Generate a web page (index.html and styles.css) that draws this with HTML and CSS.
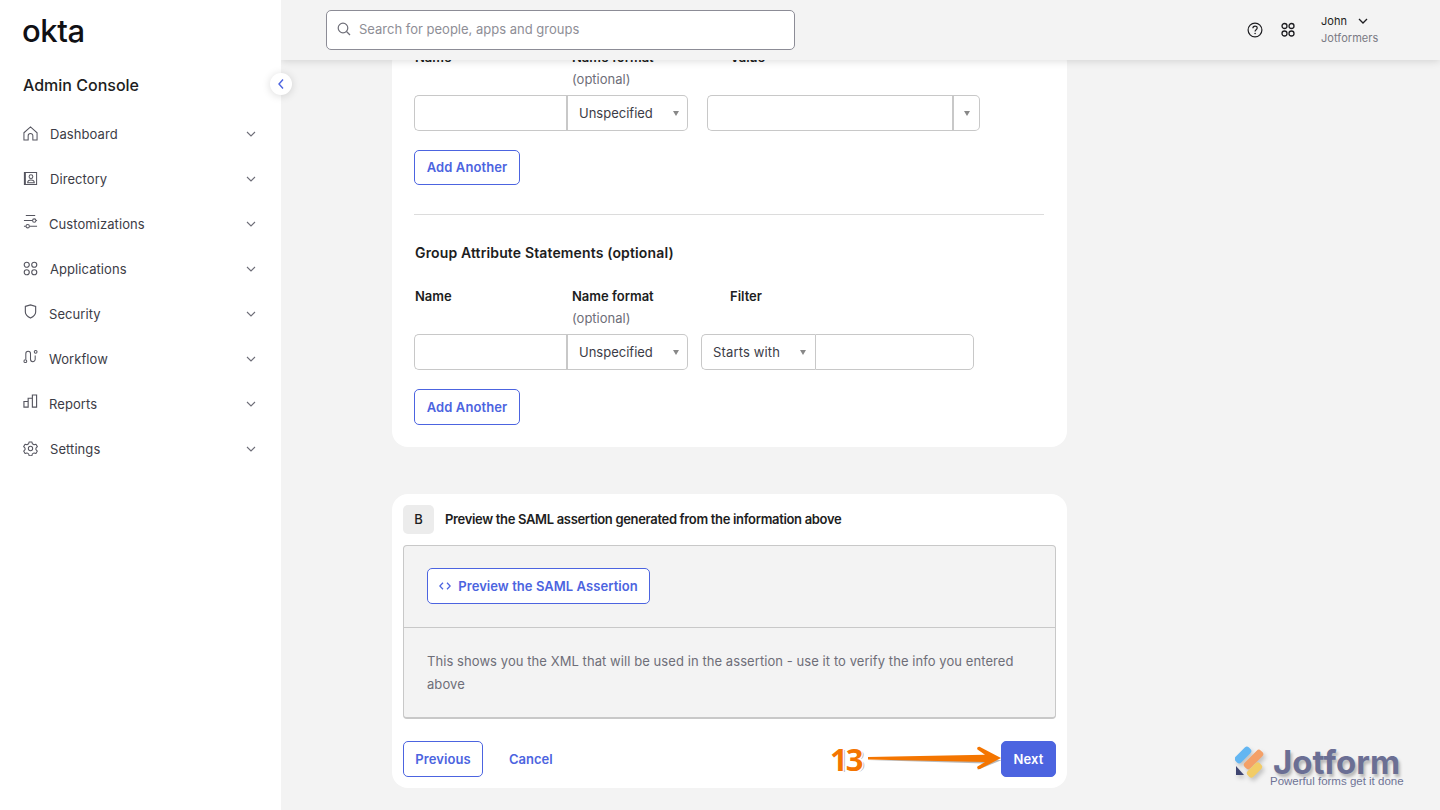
FILE: index.html
```html
<!DOCTYPE html>
<html lang="en">
<head>
    <meta charset="UTF-8">
    <meta name="viewport" content="width=device-width, initial-scale=1.0">
    <title>Admin Console</title>
    <link rel="stylesheet" href="styles.css">
</head>
<body>
    <div class="app">
        <aside class="sidebar">
            <div class="logo">okta</div>
            <h1 class="console_title">Admin Console</h1>
            <button class="collapse_btn" type="button">
                <svg width="10" height="12" viewBox="0 0 10 12"><path d="M7 1.5 3 6l4 4.5" fill="none" stroke="#4c64e0" stroke-width="1.4"/></svg>
            </button>
            <nav class="nav">
                <a class="nav_item">
                    <svg class="nav_icon" viewBox="0 0 16 16"><path d="M1 7.2 8 1l7 6.200V15h-4.500v-4.500a2.500 2.500 0 0 0-5 0V15H1z" fill="none" stroke="#55555f" stroke-width="1.100"/></svg>
                    <span>Dashboard</span>
                    <svg class="nav_chevron" viewBox="0 0 10 6"><path d="M1 1l4 4 4-4" fill="none" stroke="#6e6e78" stroke-width="1.100"/></svg>
                </a>
                <a class="nav_item">
                    <svg class="nav_icon" viewBox="0 0 16 16"><path d="M1.500 1.500h1v13h-1zM2.500 1.500h12v13h-12z" fill="none" stroke="#55555f" stroke-width="1.100"/><circle cx="8.500" cy="6" r="2" fill="none" stroke="#55555f" stroke-width="1.100"/><path d="M5 12.500c0-4 7-4 7 0z" fill="none" stroke="#55555f" stroke-width="1.100"/></svg>
                    <span>Directory</span>
                    <svg class="nav_chevron" viewBox="0 0 10 6"><path d="M1 1l4 4 4-4" fill="none" stroke="#6e6e78" stroke-width="1.100"/></svg>
                </a>
                <a class="nav_item nav_item_tight">
                    <svg class="nav_icon nav_icon_up" viewBox="0 0 16 16"><path d="M3 1.500h10M1 7h9M14 7h1M1 13h2M7 13h8" fill="none" stroke="#55555f" stroke-width="1.100"/><circle cx="12" cy="7" r="1.800" fill="none" stroke="#55555f" stroke-width="1.100"/><circle cx="5" cy="13" r="1.800" fill="none" stroke="#55555f" stroke-width="1.100"/></svg>
                    <span>Customizations</span>
                    <svg class="nav_chevron" viewBox="0 0 10 6"><path d="M1 1l4 4 4-4" fill="none" stroke="#6e6e78" stroke-width="1.100"/></svg>
                </a>
                <a class="nav_item">
                    <svg class="nav_icon" viewBox="0 0 16 16"><g fill="none" stroke="#55555f" stroke-width="1.200"><circle cx="4" cy="4" r="2.700"/><circle cx="12" cy="4" r="2.700"/><circle cx="4" cy="12" r="2.700"/><circle cx="12" cy="12" r="2.700"/></g></svg>
                    <span>Applications</span>
                    <svg class="nav_chevron" viewBox="0 0 10 6"><path d="M1 1l4 4 4-4" fill="none" stroke="#6e6e78" stroke-width="1.100"/></svg>
                </a>
                <a class="nav_item nav_item_tight">
                    <svg class="nav_icon nav_icon_up" viewBox="0 0 16 16"><path d="M2.500 2.500 8 1l5.500 1.500v6c0 3-2.500 5-5.500 6.500-3-1.500-5.500-3.500-5.500-6.500z" fill="none" stroke="#55555f" stroke-width="1.200"/></svg>
                    <span>Security</span>
                    <svg class="nav_chevron" viewBox="0 0 10 6"><path d="M1 1l4 4 4-4" fill="none" stroke="#6e6e78" stroke-width="1.100"/></svg>
                </a>
                <a class="nav_item nav_item_tight">
                    <svg class="nav_icon nav_icon_up" viewBox="0 0 16 16"><g fill="none" stroke="#55555f" stroke-width="1.100"><circle cx="2.500" cy="13" r="1.500"/><circle cx="13.500" cy="3" r="1.500"/><path d="M3 11V5a2.500 2.500 0 0 1 5 0v6a2.500 2.500 0 0 0 5 0V7"/></g></svg>
                    <span>Workflow</span>
                    <svg class="nav_chevron" viewBox="0 0 10 6"><path d="M1 1l4 4 4-4" fill="none" stroke="#6e6e78" stroke-width="1.100"/></svg>
                </a>
                <a class="nav_item nav_item_tight">
                    <svg class="nav_icon nav_icon_up" viewBox="0 0 16 16"><path d="M1 14V8h4.500v6zM5.500 14V4.500H10V14M10 14V1h4.500v13z" fill="none" stroke="#55555f" stroke-width="1.200"/></svg>
                    <span>Reports</span>
                    <svg class="nav_chevron" viewBox="0 0 10 6"><path d="M1 1l4 4 4-4" fill="none" stroke="#6e6e78" stroke-width="1.100"/></svg>
                </a>
                <a class="nav_item">
                    <svg class="nav_icon" viewBox="0 0 16 16"><path d="M6.500 1h3l.5 2 1.800 1 2-.6 1.500 2.600-1.500 1.500v1.800l1.500 1.400-1.500 2.600-2-.6-1.800 1-.5 2h-3l-.5-2-1.800-1-2 .6L.700 10.700l1.500-1.400V7.500L.700 6l1.500-2.600 2 .6L6 3z" fill="none" stroke="#55555f" stroke-width="1.100" stroke-linejoin="round"/><circle cx="8" cy="8" r="2.300" fill="none" stroke="#55555f" stroke-width="1.100"/></svg>
                    <span>Settings</span>
                    <svg class="nav_chevron" viewBox="0 0 10 6"><path d="M1 1l4 4 4-4" fill="none" stroke="#6e6e78" stroke-width="1.100"/></svg>
                </a>
            </nav>
        </aside>

        <div class="main">
            <header class="topbar">
                <div class="search">
                    <svg width="14" height="14" viewBox="0 0 14 14"><circle cx="6" cy="6" r="4.800" fill="none" stroke="#6e6e78" stroke-width="1.200"/><path d="M9.500 9.500 13 13" stroke="#6e6e78" stroke-width="1.200"/></svg>
                    <span>Search for people, apps and groups</span>
                </div>
                <div class="top_tools">
                    <svg width="16" height="16" viewBox="0 0 16 16"><circle cx="8" cy="8" r="6.900" fill="none" stroke="#1d1d21" stroke-width="1.200"/><path d="M5.900 6.200c0-2.800 4.300-2.800 4.300-.1 0 1.700-2.100 1.600-2.100 3.300" fill="none" stroke="#1d1d21" stroke-width="1.200"/><circle cx="8.100" cy="11.500" r=".8" fill="#1d1d21"/></svg>
                    <svg width="16" height="16" viewBox="0 0 16 16"><g fill="none" stroke="#1d1d21" stroke-width="1.300"><circle cx="4.500" cy="4" r="2.500"/><circle cx="11.500" cy="4" r="2.500"/><circle cx="4.500" cy="11.500" r="2.500"/><circle cx="11.500" cy="11.500" r="2.500"/></g></svg>
                    <div class="user">
                        <div class="user_name">John
                            <svg width="10" height="6" viewBox="0 0 10 6"><path d="M1 1l4 4 4-4" fill="none" stroke="#1d1d21" stroke-width="1.300"/></svg>
                        </div>
                        <div class="user_org">Jotformers</div>
                    </div>
                </div>
            </header>

            <div class="content">
                <section class="white_box box_a">
                    <div class="field_labels">
                        <div class="col_name">Name</div>
                        <div class="col_format">Name format<small>(optional)</small></div>
                        <div>Value</div>
                    </div>
                    <div class="field_row">
                        <div class="input_cell input_name"></div>
                        <div class="select_cell select_format">Unspecified<i class="caret"></i></div>
                        <div class="input_cell input_value"></div>
                        <div class="select_cell select_arrow"><i class="caret"></i></div>
                    </div>
                    <button class="btn btn_add" type="button">Add Another</button>
                    <hr class="divider">
                    <h2 class="group_title">Group Attribute Statements (optional)</h2>
                    <div class="field_labels">
                        <div class="col_name">Name</div>
                        <div class="col_format">Name format<small>(optional)</small></div>
                        <div>Filter</div>
                    </div>
                    <div class="field_row">
                        <div class="input_cell input_name"></div>
                        <div class="select_cell select_format">Unspecified<i class="caret"></i></div>
                        <div class="select_cell select_filter">Starts with<i class="caret"></i></div>
                        <div class="input_cell input_filter"></div>
                    </div>
                    <button class="btn btn_add btn_add_tall" type="button">Add Another</button>
                </section>

                <section class="white_box box_b">
                    <div class="step_head">
                        <div class="step_badge">B</div>
                        <div class="step_title">Preview the SAML assertion generated from the information above</div>
                    </div>
                    <div class="preview_panel">
                        <div class="preview_top">
                            <button class="btn btn_preview" type="button">
                                <svg width="12" height="8" viewBox="0 0 12 8"><path d="M4 .8.800 4 4 7.200M8 .8 11.200 4 8 7.200" fill="none" stroke="#4c64e0" stroke-width="1.300"/></svg>
                                Preview the SAML Assertion
                            </button>
                        </div>
                        <p class="preview_text">This shows you the XML that will be used in the assertion - use it to verify the info you entered above</p>
                    </div>
                    <div class="wizard_btns">
                        <button class="btn btn_prev" type="button">Previous</button>
                        <a class="link_cancel">Cancel</a>
                        <button class="btn btn_next" type="button">Next</button>
                    </div>
                </section>
            </div>
        </div>

        <div class="step_mark">13</div>
        <svg class="step_arrow" width="136" height="28" viewBox="0 0 136 28">
            <path d="M1 15 118 18.500l-8 6.500 25-10z" fill="#8a8a8a" opacity=".6"/>
            <path d="M1 12 118 9.800 110.500 4.500c-1-1.500.5-3.200 2.500-2.500L134 13 113 24c-2 .7-3.500-1-2.500-2.500L118 17 1 14.500z" fill="#f47500"/>
        </svg>

        <div class="watermark">
            <svg class="wm_logo" width="30" height="34" viewBox="0 0 30 34">
                <rect x="-1.500" y="6" width="19" height="8" rx="3" transform="rotate(-45 8 10)" fill="#63b6f2"/>
                <rect x="7" y="10.500" width="23" height="8" rx="3" transform="rotate(-45 18.500 14.500)" fill="#f4a067"/>
                <rect x="11" y="21" width="17" height="8" rx="3" transform="rotate(-45 19.500 25)" fill="#f2cc66"/>
                <path d="M1 21l8 9H1z" fill="#3f4570"/>
            </svg>
            <div class="wm_text">
                <div class="wm_name">Jotform</div>
                <div class="wm_tag">Powerful forms get it done</div>
            </div>
        </div>
    </div>
</body>
</html>
```

FILE: styles.css
```css
* {
    margin: 0;
    padding: 0;
    box-sizing: border-box;
}
html, body {
    height: 100%;
    overflow: hidden;
}
body {
    font-family: Inter, "Noto Sans", sans-serif;
    font-size: 14px;
    color: #1d1d21;
    background-color: #f3f3f3;
}
button {
    font-family: inherit;
}
.app {
    position: relative;
    display: flex;
    height: 810px;
    overflow: hidden;
}

/* sidebar */
.sidebar {
    position: relative;
    z-index: 3;
    width: 281px;
    flex-shrink: 0;
    background-color: white;
    padding-top: 12px;
}
.logo {
    height: 40px;
    padding-left: 22px;
    font-family: Inter, sans-serif;
    font-size: 31px;
    line-height: 37px;
    font-weight: 500;
    letter-spacing: -0.4px;
    color: #101014;
}
.console_title {
    margin-top: 21px;
    height: 24px;
    padding-left: 23px;
    font-size: 16px;
    line-height: 24px;
    font-weight: 500;
    color: #1d1d21;
}
.collapse_btn {
    position: absolute;
    left: 270px;
    top: 73px;
    width: 22px;
    height: 22px;
    border: none;
    border-radius: 50%;
    background-color: white;
    box-shadow: 0 1px 8px rgba(0, 0, 0, 0.15);
    display: flex;
    justify-content: center;
    align-items: center;
}
.nav {
    margin-top: 14px;
}
.nav_item {
    display: flex;
    align-items: center;
    height: 45px;
    padding: 0 25px 0 23px;
    font-size: 13px;
    letter-spacing: 0.07px;
    color: #3c3c46;
}
.nav_icon {
    width: 15px;
    height: 15px;
    margin-right: 12px;
    flex-shrink: 0;
}
.nav_item_tight .nav_icon {
    margin-right: 11px;
}
.nav_icon_up {
    transform: translateY(-2px);
}
.nav_chevron {
    width: 10px;
    height: 6px;
    margin-left: auto;
}

/* top bar */
.main {
    flex-grow: 1;
    min-width: 0;
    position: relative;
}
.topbar {
    position: relative;
    z-index: 2;
    height: 60px;
    background-color: #f3f3f3;
    box-shadow: 0 1px 8px rgba(0, 0, 0, 0.14);
    padding-left: 45px;
    display: flex;
    align-items: center;
}
.search {
    width: 469px;
    height: 40px;
    background-color: white;
    border: 1px solid #8c8c96;
    border-radius: 5px;
    padding: 0 0 2px 10px;
    display: flex;
    align-items: center;
    gap: 8px;
    color: #8e8e96;
    font-size: 13px;
}
.top_tools {
    margin-left: auto;
    padding-right: 61px;
    display: flex;
    align-items: center;
    gap: 17px;
}
.user {
    margin-left: 8px;
    width: 58px;
    font-size: 11px;
    line-height: 17px;
    letter-spacing: 0.05px;
    white-space: nowrap;
}
.user_name svg {
    margin-left: 8px;
    vertical-align: 1px;
}
.user_org {
    color: #7a7a84;
}

/* content */
.content {
    padding-left: 111px;
    width: 786px;
}
.white_box {
    background-color: white;
    border-radius: 16px;
}
.box_a {
    margin-top: -13px;
    padding: 0 23px 22px 22px;
    height: 400px;
}
.field_labels {
    display: flex;
    height: 48px;
    font-size: 13px;
    line-height: 20px;
    font-weight: 600;
}
.col_name {
    width: 158px;
    padding-left: 1px;
}
.col_format {
    width: 158px;
}
.col_format small {
    display: block;
    margin-top: 2px;
    font-size: 13px;
    font-weight: 400;
    color: #6e6e78;
}
.field_row {
    display: flex;
    height: 36px;
    font-size: 13px;
}
.input_cell, .select_cell {
    height: 100%;
    background-color: white;
    border: 1px solid #c8c8c8;
}
.select_cell {
    display: flex;
    align-items: center;
    justify-content: space-between;
    color: #3c3c46;
}
.input_name {
    width: 152px;
    border-right: none;
    border-radius: 5px 0 0 5px;
}
.select_format {
    width: 122px;
    padding: 0 8px 0 11px;
    border-left-width: 2px;
    border-radius: 0 5px 5px 0;
}
.input_value {
    width: 245px;
    margin-left: 19px;
    border-radius: 5px 0 0 5px;
    border-right-width: 0;
}
.select_arrow {
    width: 28px;
    justify-content: center;
    border-left-width: 2px;
    border-radius: 0 5px 5px 0;
}
.select_filter {
    width: 114px;
    margin-left: 13px;
    padding: 0 9px 0 11px;
    letter-spacing: 0.15px;
    border-right: none;
    border-radius: 5px 0 0 5px;
}
.input_filter {
    width: 159px;
    border-radius: 0 5px 5px 0;
}
.caret {
    width: 0;
    height: 0;
    border-left: 3.500px solid transparent;
    border-right: 3.500px solid transparent;
    border-top: 5px solid #888;
}
.btn {
    border: 1px solid #4c64e0;
    border-radius: 5px;
    background-color: white;
    color: #4c64e0;
    font-size: 13px;
    font-weight: 600;
    letter-spacing: 0.1px;
}
.btn_add {
    display: block;
    width: 106px;
    height: 35px;
    margin-top: 19px;
    padding-bottom: 1px;
}
.btn_add_tall {
    height: 36px;
}
.divider {
    border: none;
    border-top: 1px solid #dcdcdc;
    margin: 29px 0 0;
}
.group_title {
    margin: 26px 0 21px;
    height: 24px;
    font-size: 14px;
    line-height: 24px;
    font-weight: 600;
    letter-spacing: 0.14px;
    padding-left: 1px;
}
.box_b {
    margin-top: 47px;
    height: 294px;
    padding: 11px;
}
.step_head {
    display: flex;
    align-items: center;
    gap: 11px;
    height: 29px;
}
.step_badge {
    width: 31px;
    height: 29px;
    border-radius: 5px;
    background-color: #ececec;
    display: flex;
    justify-content: center;
    align-items: center;
    font-size: 13px;
    font-weight: 500;
    padding-bottom: 1px;
}
.step_title {
    font-size: 13px;
    font-weight: 600;
    letter-spacing: -0.33px;
    padding-bottom: 1px;
}
.preview_panel {
    margin-top: 11px;
    height: 174px;
    background-color: #f3f3f3;
    border: 1px solid #c8c8c8;
    border-bottom-width: 2px;
    border-radius: 4px;
}
.preview_top {
    height: 82px;
    padding: 22px 23px;
    border-bottom: 1px solid #c8c8c8;
}
.btn_preview {
    width: 223px;
    height: 36px;
    display: flex;
    align-items: center;
    justify-content: center;
    gap: 7px;
    letter-spacing: 0.06px;
}
.preview_text {
    padding: 22px 23px;
    font-size: 13px;
    line-height: 23px;
    letter-spacing: 0.07px;
    color: #6e6e78;
}
.wizard_btns {
    margin-top: 22px;
    display: flex;
    align-items: center;
    height: 36px;
}
.btn_prev {
    width: 80px;
    height: 36px;
}
.link_cancel {
    margin-left: 26px;
    font-size: 13px;
    font-weight: 600;
    color: #4c64e0;
}
.btn_next {
    margin-left: auto;
    width: 55px;
    height: 36px;
    background-color: #4c64e0;
    color: white;
}

/* things over the page: tutorial mark and watermark */
.step_mark {
    position: absolute;
    left: 830px;
    top: 739px;
    z-index: 4;
    font-family: "Open Sans", sans-serif;
    font-size: 31px;
    line-height: 40px;
    font-weight: 700;
    letter-spacing: -2px;
    color: #f47500;
    text-shadow: 1px 1px 0 white, -1px -1px 0 white, 1px -1px 0 white, -1px 1px 0 white, -2px 0 0 white, 0 2px 0 white, 2px 1px 0 #bbb;
}
.step_arrow {
    position: absolute;
    left: 867px;
    top: 745px;
    z-index: 4;
}
.watermark {
    position: absolute;
    left: 1235px;
    top: 745px;
    z-index: 4;
    display: flex;
}
.wm_logo {
    flex-shrink: 0;
    filter: drop-shadow(2px 3px 2px rgba(0, 0, 0, 0.2));
}
.wm_text {
    margin-left: 5px;
    padding-top: 5px;
}
.wm_name {
    font-family: Inter, sans-serif;
    font-size: 33px;
    line-height: 25px;
    font-weight: 700;
    color: #6b6f94;
    text-shadow: 2px 3px 3px rgba(0, 0, 0, 0.25);
    margin-left: 3px;
}
.wm_tag {
    font-family: "Liberation Sans", sans-serif;
    font-size: 11.500px;
    line-height: 12px;
    color: #6f7396;
}
```
